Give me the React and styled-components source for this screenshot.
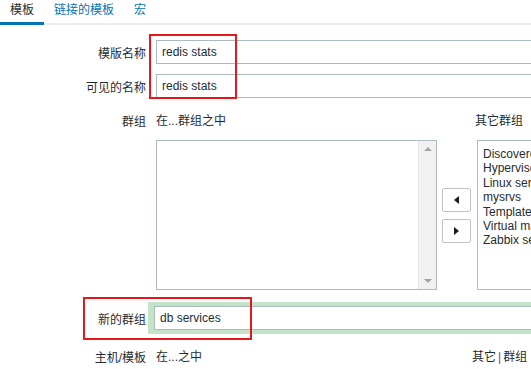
import React from 'react';
import styled, { createGlobalStyle } from 'styled-components';

const FONT = '"Liberation Sans", Arial, "Noto Sans CJK SC", sans-serif';
const TEXT = '#1f2c33';
const BORDER = '#acbbc0';

const GlobalStyle = createGlobalStyle`
  html, body {
    margin: 0;
    padding: 0;
    background: #fff;
    overflow: hidden;
  }
  body {
    font-family: ${FONT};
    font-size: 12px;
    color: ${TEXT};
  }
`;

const Page = styled.div`
  position: relative;
  width: 531px;
  height: 369px;
  overflow: hidden;
`;

const TabBar = styled.div`
  display: flex;
  height: 25px;
  box-sizing: border-box;
  border-bottom: 2px solid #ebeef0;
`;

const Tab = styled.div`
  height: 25px;
  box-sizing: border-box;
  padding: 3px 10px 0;
  margin-bottom: -2px;
  line-height: 14px;
  color: ${({ active }) => (active ? TEXT : '#0275b8')};
  border-bottom: 3px solid ${({ active }) => (active ? '#0275b8' : 'transparent')};
`;

const Form = styled.div`
  display: flex;
  flex-direction: column;
  padding-top: 15px;
`;

const Row = styled.div`
  display: grid;
  grid-template-columns: 146px 1fr;
  column-gap: 10px;
  align-items: ${({ top }) => (top ? 'start' : 'center')};
  margin-top: ${({ gap }) => gap || 0}px;
`;

const Label = styled.div`
  text-align: right;
  white-space: nowrap;
  padding-top: ${({ top }) => (top ? 4 : 0)}px;
`;

const TextInput = styled.input`
  width: 460px;
  height: 24px;
  box-sizing: border-box;
  border: 1px solid ${BORDER};
  padding: 0 5px;
  font-family: ${FONT};
  font-size: 12px;
  color: ${TEXT};
  background: #fff;
  outline: none;
`;

const Highlight = styled.div`
  margin-left: -8px;
  padding: 4px 0 4px 6px;
  background: #c5e3c8;
`;

const GroupField = styled.div`
  display: flex;
  flex-direction: column;
`;

const Heads = styled.div`
  display: flex;
  height: 22px;
  padding-top: 6px;
  box-sizing: border-box;
  line-height: 14px;
  white-space: nowrap;
`;

const HeadLeft = styled.div`
  width: ${({ w }) => w}px;
  flex: none;
`;

const Sep = styled.span`
  color: #7a3a8c;
  margin: 0 2px;
`;

const Lists = styled.div`
  display: flex;
  align-items: center;
  margin-top: 10px;
`;

const ListBox = styled.div`
  display: flex;
  flex: none;
  width: ${({ w }) => w}px;
  height: 150px;
  box-sizing: border-box;
  border: 1px solid ${BORDER};
  background: #fff;
`;

const Items = styled.div`
  flex: 1;
  padding: 6px 5px;
  line-height: 14.4px;
  white-space: nowrap;
  overflow: hidden;
`;

const ScrollBar = styled.div`
  width: 17px;
  display: flex;
  flex-direction: column;
  justify-content: space-between;
  align-items: center;
  padding: 6px 0;
  background: #f1f1f1;
  border-left: 1px solid #e6e6e6;
`;

const Arrow = styled.div`
  width: 0;
  height: 0;
  border-left: 4px solid transparent;
  border-right: 4px solid transparent;
  ${({ down }) => (down ? 'border-top: 4px solid #a3a3a3;' : 'border-bottom: 4px solid #a3a3a3;')}
`;

const Buttons = styled.div`
  display: flex;
  flex-direction: column;
  gap: 7px;
  margin: 0 6px 0 5px;
`;

const MoveButton = styled.button`
  width: 29px;
  height: 24px;
  box-sizing: border-box;
  border: 1px solid #c2c2c2;
  border-radius: 2px;
  background: #fff;
  padding: 0;
  display: flex;
  align-items: center;
  justify-content: center;
`;

const Tri = styled.span`
  width: 0;
  height: 0;
  border-top: 4px solid transparent;
  border-bottom: 4px solid transparent;
  ${({ right }) => (right ? 'border-left: 5px solid #1a1a1a;' : 'border-right: 5px solid #1a1a1a;')}
`;

const Mark = styled.div`
  position: absolute;
  box-sizing: border-box;
  border: 2px solid #e8161d;
  pointer-events: none;
`;

const otherGroups = [
  'Discovered hosts',
  'Hypervisors',
  'Linux servers',
  'mysrvs',
  'Templates',
  'Virtual machines',
  'Zabbix servers',
];

export default function App() {
  return (
    <Page>
      <GlobalStyle />
      <TabBar>
        <Tab active>模板</Tab>
        <Tab>链接的模板</Tab>
        <Tab>宏</Tab>
      </TabBar>

      <Form>
        <Row>
          <Label>模版名称</Label>
          <TextInput defaultValue="redis stats" />
        </Row>
        <Row gap={10}>
          <Label>可见的名称</Label>
          <TextInput defaultValue="redis stats" />
        </Row>

        <Row top gap={10}>
          <Label top>群组</Label>
          <GroupField>
            <Heads>
              <HeadLeft w={319}>在...群组之中</HeadLeft>
              <span>其它群组</span>
            </Heads>
            <Lists>
              <ListBox w={281}>
                <Items />
                <ScrollBar>
                  <Arrow />
                  <Arrow down />
                </ScrollBar>
              </ListBox>
              <Buttons>
                <MoveButton><Tri /></MoveButton>
                <MoveButton><Tri right /></MoveButton>
              </Buttons>
              <ListBox w={200}>
                <Items>
                  {otherGroups.map((g) => <div key={g}>{g}</div>)}
                </Items>
              </ListBox>
            </Lists>
          </GroupField>
        </Row>

        <Row gap={12}>
          <Label>新的群组</Label>
          <Highlight>
            <TextInput defaultValue="db services" />
          </Highlight>
        </Row>

        <Row top gap={10}>
          <Label top>主机/模板</Label>
          <Heads>
            <HeadLeft w={316}>在...之中</HeadLeft>
            <span>其它<Sep>|</Sep>群组</span>
          </Heads>
        </Row>
      </Form>

      <Mark style={{ left: 149, top: 34, width: 88, height: 65 }} />
      <Mark style={{ left: 83, top: 297, width: 169, height: 43 }} />
    </Page>
  );
}
